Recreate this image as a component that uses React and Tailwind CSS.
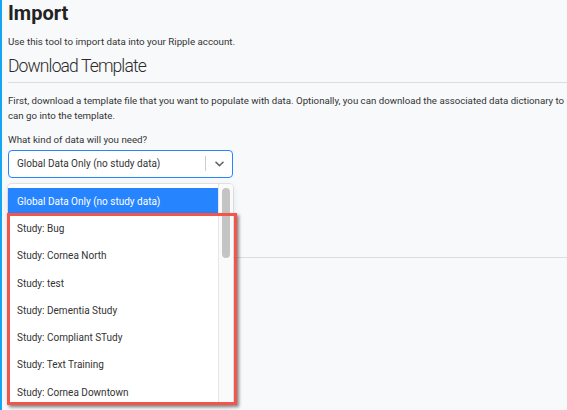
import React from 'react';

const options = [
  'Global Data Only (no study data)',
  'Study: Bug',
  'Study: Cornea North',
  'Study: test',
  'Study: Dementia Study',
  'Study: Compliant STudy',
  'Study: Text Training',
  'Study: Cornea Downtown',
];

const ChevronDown = () => (
  <svg viewBox="0 0 20 20" className="h-[15px] w-[15px] fill-[#666]">
    <path d="M4.516 7.548c0.436-0.446 1.043-0.481 1.576 0l3.908 3.747 3.908-3.747c0.533-0.481 1.141-0.446 1.574 0 0.436 0.445 0.408 1.197 0 1.615-0.406 0.418-4.695 4.502-4.695 4.502-0.217 0.223-0.502 0.335-0.787 0.335s-0.57-0.112-0.789-0.335c0 0-4.287-4.084-4.695-4.502s-0.436-1.17 0-1.615z" />
  </svg>
);

export default function App() {
  return (
    <div
      className="h-[410px] w-[567px] overflow-hidden border-l-2 border-[#14a6f2] bg-[#f8f9fb] text-[#333]"
      style={{ fontFamily: 'Roboto, "Liberation Sans", sans-serif' }}
    >
      <div className="w-[660px] pl-[6px]">
        <h1 className="pt-[1px] text-[20px] font-bold leading-[24px] text-[#222]">Import</h1>
        <p className="mt-[10px] text-[9.75px] leading-[14px]">
          Use this tool to import data into your Ripple account.
        </p>
        <h2 className="mt-[6px] text-[17.5px] font-light leading-[22px] tracking-[-0.05em] text-[#2a2a2a]">
          Download Template
        </h2>
        <hr className="mt-[5px] border-t border-[#dcdde0]" />
        <p className="mt-[10px] text-[9.7px] leading-[15px]">
          First, download a template file that you want to populate with data. Optionally, you can download the
          associated data dictionary to see what data
          <br />
          can go into the template.
        </p>
        <label className="mt-[10px] block text-[9.75px] leading-[14px]">What kind of data will you need?</label>

        <div className="relative mt-[2.5px] w-[225px]">
          <div className="flex h-[28px] items-center rounded-[4px] border-[1.5px] border-[#2684ff] bg-white">
            <span className="flex-1 pl-[8px] text-[10px] text-[#333]">Global Data Only (no study data)</span>
            <span className="h-[15px] w-px bg-[#ccc]" />
            <span className="flex w-[26px] justify-center">
              <ChevronDown />
            </span>
          </div>

          <div className="absolute left-0 top-[34px] z-10 flex h-[220px] w-[225px] overflow-hidden rounded-[4px] bg-white shadow-[0_0_0_1px_rgba(0,0,0,0.08),0_3px_8px_rgba(0,0,0,0.1)]">
            <ul className="flex-1 pt-[4px]">
              {options.map((opt, i) => (
                <li
                  key={opt}
                  className={
                    i === 0
                      ? 'flex h-[27.3px] items-center bg-[#2684ff] pl-[9px] text-[10px] text-white'
                      : 'flex h-[27.3px] items-center pl-[9px] text-[10px] text-[#333]'
                  }
                >
                  {opt}
                </li>
              ))}
            </ul>
            <div className="w-[15px] border-l border-[#e6e6e6] bg-[#fafafa] pl-[3px] pt-[4px]">
              <div className="h-[70px] w-[8px] rounded-full bg-[#c4c4c4]" />
            </div>
          </div>

          <div className="pointer-events-none absolute left-[-1px] top-[63px] z-20 h-[192px] w-[230px] border-[3px] border-[#f2554a] shadow-[2px_2px_3px_rgba(0,0,0,0.45)]" />
        </div>

        <hr className="mt-[79px] border-t border-[#dcdde0]" />
      </div>
    </div>
  );
}
